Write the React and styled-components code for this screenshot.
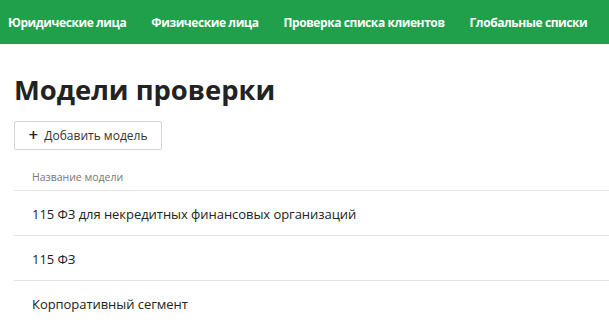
import React from "react";
import styled, { createGlobalStyle } from "styled-components";

const GlobalStyle = createGlobalStyle`
  body {
    margin: 0;
    font-family: "Open Sans", "Noto Sans", sans-serif;
    background: #fff;
    color: #222;
  }
`;

const NavBar = styled.nav`
  height: 44px;
  background: #21a04b;
  display: flex;
  align-items: center;
  padding: 0 8px;
  gap: 25px;
  overflow: hidden;
  white-space: nowrap;
`;

const NavItem = styled.a`
  color: #fff;
  font-size: 12px;
  font-weight: 700;
  letter-spacing: -0.42px;
  cursor: pointer;
`;

const Content = styled.main`
  padding: 0 0 0 14px;
`;

const Title = styled.h1`
  margin: 0;
  padding-top: 27px;
  font-size: 27.4px;
  font-weight: 700;
  line-height: 38px;
  color: #222;
`;

const AddButton = styled.button`
  margin-top: 12px;
  height: 29px;
  width: 148px;
  display: flex;
  align-items: center;
  justify-content: center;
  gap: 6px;
  background: #fff;
  border: 1px solid #d4d4d4;
  border-radius: 2px;
  font-family: inherit;
  font-size: 12px;
  color: #333;
  padding: 0;
`;

const Plus = styled.span`
  font-size: 17px;
  font-weight: 600;
  line-height: 1;
  margin-top: -2px;
  color: #222;
`;

const Table = styled.div`
  margin-top: 20px;
`;

const HeadCell = styled.div`
  height: 20px;
  padding-left: 18px;
  font-size: 10.5px;
  color: #777;
  border-bottom: 1px solid #e4e4e4;
`;

const Row = styled.div`
  height: 44px;
  display: flex;
  align-items: center;
  padding: 1px 0 0 18px;
  box-sizing: border-box;
  height: 45px;
  font-size: 13px;
  color: #222;
  border-bottom: ${(p) => (p.$last ? "none" : "1px solid #e4e4e4")};
  letter-spacing: -0.05px;
`;

const rows = [
  "115 ФЗ для некредитных финансовых организаций",
  "115 ФЗ",
  "Корпоративный сегмент",
];

export default function App() {
  return (
    <>
      <GlobalStyle />
      <NavBar>
        <NavItem>Юридические лица</NavItem>
        <NavItem>Физические лица</NavItem>
        <NavItem>Проверка списка клиентов</NavItem>
        <NavItem>Глобальные списки</NavItem>
      </NavBar>
      <Content>
        <Title>Модели проверки</Title>
        <AddButton>
          <Plus>+</Plus>
          Добавить модель
        </AddButton>
        <Table>
          <HeadCell>Название модели</HeadCell>
          {rows.map((r, i) => (
            <Row key={r} $last={i === rows.length - 1}>
              {r}
            </Row>
          ))}
        </Table>
      </Content>
    </>
  );
}
